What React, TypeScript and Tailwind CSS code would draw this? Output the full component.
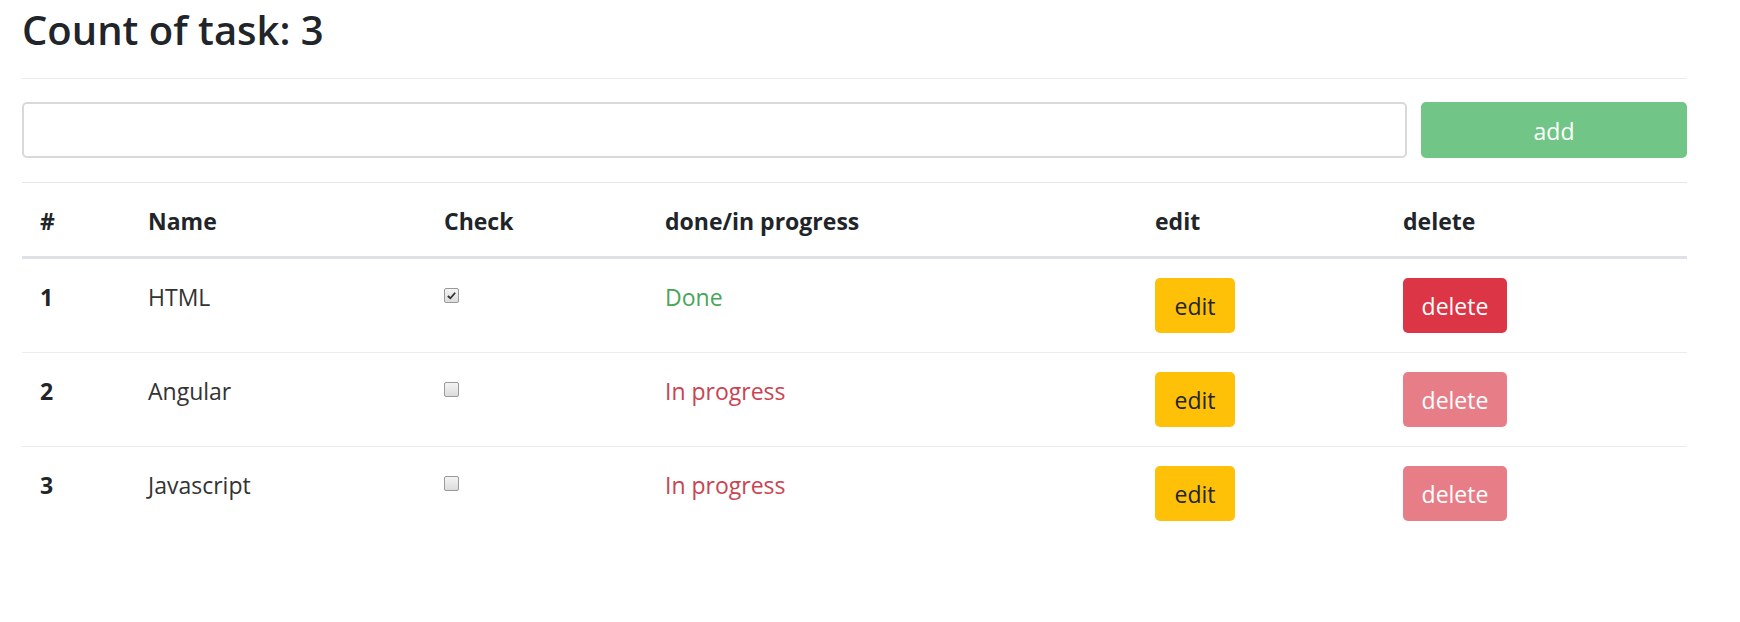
import { useState } from 'react';

interface Task {
  id: number;
  name: string;
  done: boolean;
}

const initialTasks: Task[] = [
  { id: 1, name: 'HTML', done: true },
  { id: 2, name: 'Angular', done: false },
  { id: 3, name: 'Javascript', done: false },
];

function Checkbox({ checked, onChange }: { checked: boolean; onChange: () => void }) {
  return (
    <button
      type="button"
      onClick={onChange}
      className="mt-[10px] flex h-[15px] w-[15px] items-center justify-center rounded-[2px] border border-[#9a9a9a] bg-gradient-to-b from-[#f4f4f4] to-[#dcdcdc]"
    >
      {checked && (
        <svg viewBox="0 0 12 12" className="h-[11px] w-[11px]">
          <path d="M2 6.5 L4.8 9 L10 3" fill="none" stroke="#333" strokeWidth="2" />
        </svg>
      )}
    </button>
  );
}

export default function App() {
  const [tasks, setTasks] = useState<Task[]>(initialTasks);
  const [value, setValue] = useState('');

  const toggle = (id: number) =>
    setTasks(tasks.map((t) => (t.id === id ? { ...t, done: !t.done } : t)));

  return (
    <div className="min-h-[622px] w-[1740px] bg-white pl-[22px] pr-[53px] font-['Open_Sans',sans-serif] text-[#212529]">
      {/* Title */}
      <div className="h-[79px] border-b border-[#ececec] pt-[10px]">
        <h2 className="text-[40px] leading-none font-semibold">Count of task: {tasks.length}</h2>
      </div>

      {/* Input row */}
      <div className="mt-[23px] flex gap-[14px]">
        <input
          value={value}
          onChange={(e) => setValue(e.target.value)}
          className="h-[56px] flex-1 rounded-[5px] border-2 border-[#d9d9d9] px-4 text-[23px] outline-none"
        />
        <button
          type="button"
          disabled={!value}
          className="h-[56px] w-[266px] rounded-[5px] bg-[#71c687] pt-[2px] text-[23px] text-white"
        >
          add
        </button>
      </div>

      {/* Table */}
      <table className="mt-[24px] w-full table-fixed border-collapse text-[23px] leading-[1.5]">
        <colgroup>
          <col className="w-[108px]" />
          <col className="w-[296px]" />
          <col className="w-[221px]" />
          <col className="w-[490px]" />
          <col className="w-[248px]" />
          <col className="w-[302px]" />
        </colgroup>
        <thead>
          <tr className="border-t border-[#e6e6e6] border-b-[3px] border-b-[#dee2e6] text-left font-bold">
            <th className="px-[18px] pt-[21px] pb-[17px] align-top">#</th>
            <th className="px-[18px] pt-[21px] pb-[17px] align-top">Name</th>
            <th className="px-[18px] pt-[21px] pb-[17px] align-top">Check</th>
            <th className="px-[18px] pt-[21px] pb-[17px] align-top">done/in progress</th>
            <th className="px-[18px] pt-[21px] pb-[17px] align-top">edit</th>
            <th className="px-[18px] pt-[21px] pb-[17px] align-top">delete</th>
          </tr>
        </thead>
        <tbody>
          {tasks.map((t, i) => (
            <tr key={t.id} className={i > 0 ? 'border-t border-[#ececec]' : ''}>
              <td className="px-[18px] pt-[21px] pb-[17px] align-top font-bold">{t.id}</td>
              <td className="px-[18px] pt-[21px] pb-[17px] align-top text-[#333]">{t.name}</td>
              <td className="px-[18px] py-[19px] align-top">
                <Checkbox checked={t.done} onChange={() => toggle(t.id)} />
              </td>
              <td className={`px-[18px] pt-[21px] pb-[17px] align-top ${t.done ? 'text-[#48a65a]' : 'text-[#c94452]'}`}>
                {t.done ? 'Done' : 'In progress'}
              </td>
              <td className="px-[18px] py-[19px] align-top">
                <button type="button" className="h-[55px] w-[80px] rounded-[5px] bg-[#ffc107] pt-[3px] text-[#212529]">
                  edit
                </button>
              </td>
              <td className="px-[18px] py-[19px] align-top">
                <button
                  type="button"
                  disabled={!t.done}
                  className={`h-[55px] w-[104px] rounded-[5px] pt-[3px] text-white ${t.done ? 'bg-[#dc3545]' : 'bg-[#e77e87]'}`}
                >
                  delete
                </button>
              </td>
            </tr>
          ))}
        </tbody>
      </table>
    </div>
  );
}
